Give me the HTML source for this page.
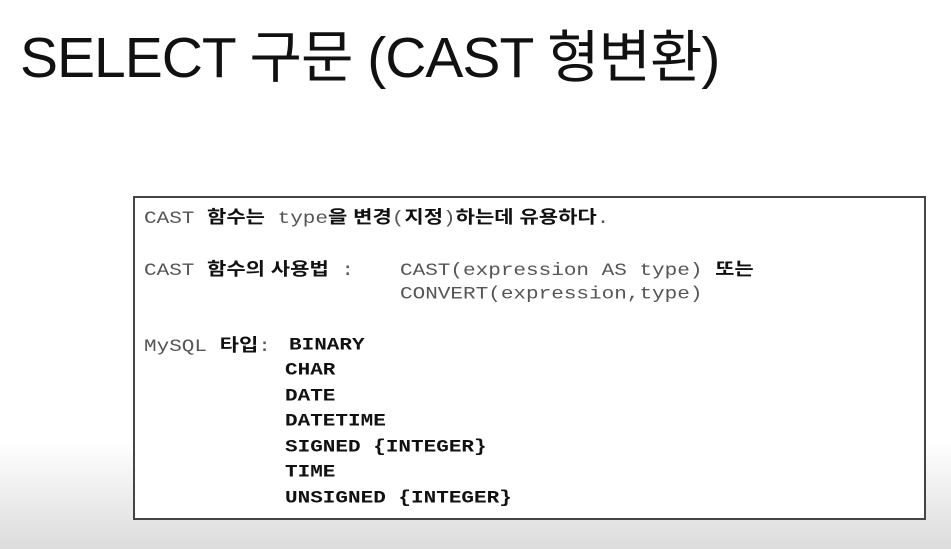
<!DOCTYPE html>
<html><head><meta charset="utf-8"><style>
html,body{margin:0;padding:0}
body{width:951px;height:549px;position:relative;overflow:hidden;background:linear-gradient(#fff 0,#fff 440px,#dcdcdc 549px);font-family:"Liberation Sans","Noto Sans CJK KR",sans-serif}
.t{position:absolute;left:20px;top:12px;font-size:57px;color:#111;white-space:nowrap;letter-spacing:-1px}
.box{position:absolute;left:133px;top:196px;width:789px;height:320px;border:2px solid #444;background:#fff}
.l{position:absolute;white-space:nowrap;font-family:"Liberation Mono","Courier New","Cousine","DejaVu Sans Mono",monospace;font-size:21px;letter-spacing:0;color:#555;line-height:20px;transform:scaleY(0.85);transform-origin:0 50%}
.k{font-family:"Liberation Sans","Noto Sans CJK KR",sans-serif;font-weight:bold;color:#111;font-size:21px}
.b{font-weight:bold;color:#111}
</style></head><body>
<div class="t">SELECT 구문 (CAST 형변환)</div>
<div class="box"></div>
<div class="l" style="left:144px;top:208px">CAST <span class="k">함수는</span> type<span class="k">을 변경</span>(<span class="k">지정</span>)<span class="k">하는데 유용하다</span>.</div>
<div class="l" style="left:144px;top:260px">CAST <span class="k">함수의 사용법</span> :</div>
<div class="l" style="left:400px;top:260px">CAST(expression AS type) <span class="k">또는</span></div>
<div class="l" style="left:400px;top:285px">CONVERT(expression,type)</div>
<div class="l" style="left:144px;top:336px">MySQL <span class="k">타입</span>:</div>
<div class="l b" style="left:289px;top:336px">BINARY</div>
<div class="l b" style="left:285px;top:361px">CHAR</div>
<div class="l b" style="left:285px;top:387px">DATE</div>
<div class="l b" style="left:285px;top:412px">DATETIME</div>
<div class="l b" style="left:285px;top:438px">SIGNED {INTEGER}</div>
<div class="l b" style="left:285px;top:463px">TIME</div>
<div class="l b" style="left:285px;top:489px">UNSIGNED {INTEGER}</div>
</body></html>
